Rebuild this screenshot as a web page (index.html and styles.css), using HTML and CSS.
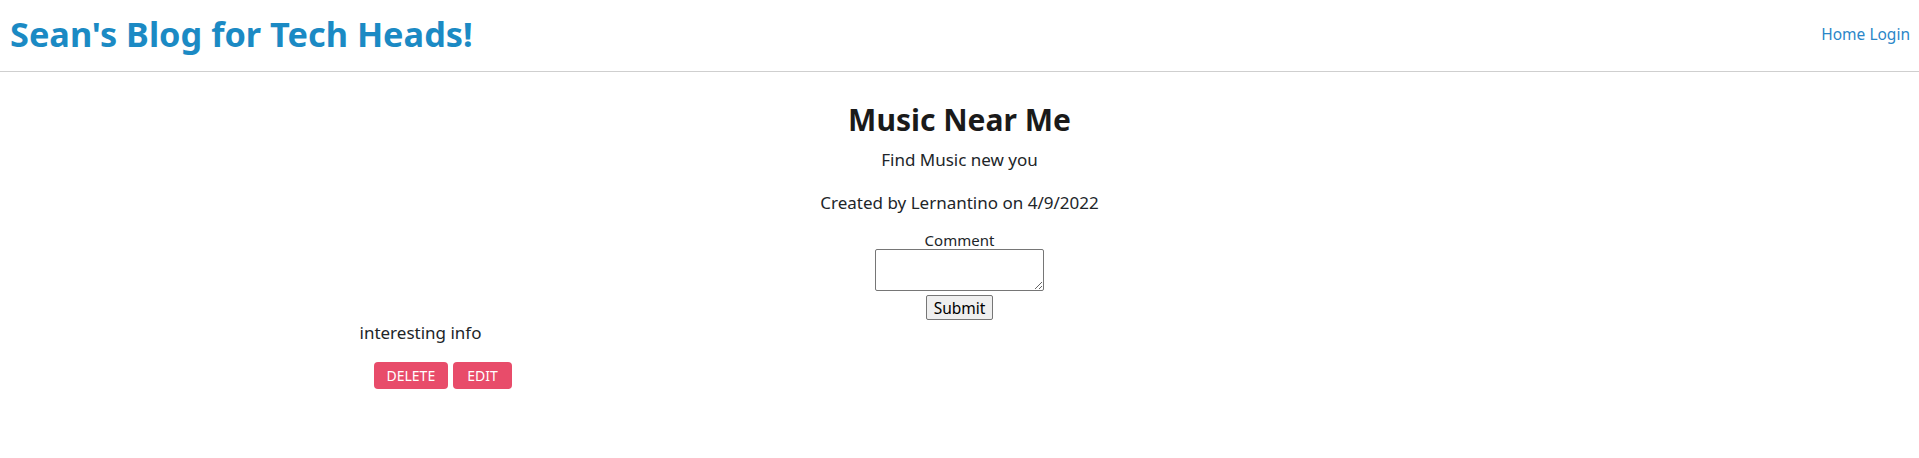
FILE: index.html
```html
<!DOCTYPE html>
<html lang="en">
<head>
<meta charset="utf-8">
<title>Sean's Blog for Tech Heads!</title>
<link rel="stylesheet" href="styles.css">
</head>
<body>
<header class="site-header">
  <h1 class="site-title">Sean's Blog for Tech Heads!</h1>
  <nav class="site-nav"><a href="#">Home</a> <a href="#">Login</a></nav>
</header>
<main class="container">
  <section class="post">
    <h2 class="post-title">Music Near Me</h2>
    <p class="post-body">Find Music new you</p>
    <p class="post-meta">Created by Lernantino on 4/9/2022</p>
    <form class="comment-form">
      <label class="comment-label" for="comment">Comment</label>
      <textarea id="comment" class="comment-input"></textarea>
      <button type="button" class="submit-btn">Submit</button>
    </form>
  </section>
  <section class="comments">
    <p class="comment-text">interesting info</p>
    <div class="actions">
      <button type="button" class="action-btn">DELETE</button>
      <button type="button" class="action-btn action-btn-edit">EDIT</button>
    </div>
  </section>
</main>
</body>
</html>
```

FILE: styles.css
```css
html, body {
  margin: 0;
  padding: 0;
  background: #ffffff;
}
body {
  font-family: "Noto Sans", "Open Sans", sans-serif;
  color: #212529;
  font-size: 16px;
}
.site-header {
  display: flex;
  justify-content: space-between;
  align-items: center;
  height: 72px;
  padding: 0 9px 4px 10px;
  border-bottom: 1px solid #cfcfcf;
  box-sizing: border-box;
}
.site-title {
  margin: 0;
  font-size: 34.3px;
  line-height: 1.2;
  font-weight: 700;
  color: #1b8ac4;
}
.site-nav {
  font-size: 15.5px;
}
.site-nav a {
  color: #2a86c8;
  text-decoration: none;
}
.container {
  width: 1200px;
  margin: 0 auto;
}
.post {
  text-align: center;
  padding-top: 28px;
}
.post-title {
  margin: 0;
  font-size: 30px;
  line-height: 40px;
  font-weight: 700;
  color: #1a1a1a;
}
.post-body, .post-meta {
  margin: 0;
  font-size: 17px;
  line-height: 24px;
}
.post-body { margin-top: 8px; }
.post-meta { margin-top: 19px; }
.comment-form {
  display: flex;
  flex-direction: column;
  align-items: center;
  margin-top: 16px;
}
.comment-label {
  font-size: 15px;
  line-height: 18px;
}
.comment-input {
  width: 169px;
  height: 42px;
  box-sizing: border-box;
  border: 1px solid #767676;
  border-radius: 2px;
  margin: 0;
  resize: vertical;
  font-family: inherit;
}
.submit-btn {
  margin-top: 4px;
  height: 25px;
  padding: 0 7px;
  font-family: inherit;
  font-size: 15.5px;
  background: #efefef;
  border: 1px solid #767676;
  border-radius: 2px;
  color: #000;
}
.comments {
  text-align: left;
}
.comment-text {
  margin: 1px 0 0;
  font-size: 17px;
  line-height: 24px;
}
.actions {
  display: flex;
  gap: 5px;
  padding-left: 14px;
  margin-top: 17px;
}
.action-btn {
  height: 27px;
  padding: 0 13px;
  border: none;
  border-radius: 4px;
  background: #e84c6a;
  color: #ffffff;
  font-family: inherit;
  font-size: 14px;
}
.action-btn-edit {
  padding: 0 14px;
}
```
